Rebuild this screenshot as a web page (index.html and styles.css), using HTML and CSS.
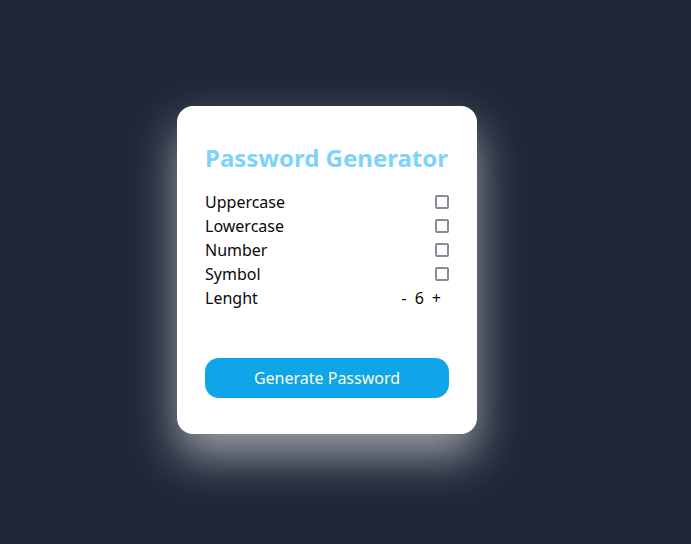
FILE: index.html
```html
<!DOCTYPE html>
<html>
<head>
<meta charset="utf-8">
<link rel="stylesheet" href="styles.css">
</head>
<body>
<main class="page">
  <section class="card">
    <h1 class="title">Password Generator</h1>
    <div class="options">
      <label class="row"><span>Uppercase</span><input type="checkbox" class="check"></label>
      <label class="row"><span>Lowercase</span><input type="checkbox" class="check"></label>
      <label class="row"><span>Number</span><input type="checkbox" class="check"></label>
      <label class="row"><span>Symbol</span><input type="checkbox" class="check"></label>
      <div class="row"><span>Lenght</span>
        <div class="counter"><span class="step">-</span><span class="value">6</span><span class="step">+</span></div>
      </div>
    </div>
    <button class="generate">Generate Password</button>
  </section>
</main>
</body>
</html>
```
FILE: styles.css
```css
html, body {
  margin: 0;
  height: 100%;
}
body {
  background: #1f2839;
  font-family: "Noto Sans", "Open Sans", sans-serif;
  color: #0a0a0a;
}
.page {
  height: 100%;
  display: flex;
  align-items: center;
  justify-content: center;
  padding-right: 37px;
  box-sizing: border-box;
}
.card {
  width: 300px;
  height: 328px;
  box-sizing: border-box;
  background: #fff;
  border-radius: 16px;
  padding: 36px 28px 36px 28px;
  display: flex;
  flex-direction: column;
  box-shadow: 0 22px 45px rgba(255, 255, 255, 0.55);
  margin-top: -4px;
}
.title {
  margin: 0 0 16px 0;
  font-size: 24px;
  line-height: 32px;
  font-weight: 700;
  color: #7dd3fc;
}
.options {
  display: flex;
  flex-direction: column;
}
.row {
  display: flex;
  justify-content: space-between;
  align-items: center;
  height: 24px;
  font-size: 16px;
  line-height: 24px;
}
.check {
  appearance: none;
  -webkit-appearance: none;
  box-sizing: border-box;
  width: 14px;
  height: 14px;
  margin: 0;
  border: 2px solid #8c8a97;
  border-radius: 2px;
  background: #fff;
}
.counter {
  display: flex;
  gap: 8px;
  margin-right: 8px;
}
.generate {
  margin-top: auto;
  height: 40px;
  border: none;
  border-radius: 14px;
  background: #0ea5e9;
  color: #fefce8;
  font-family: inherit;
  font-size: 16px;
}
```
